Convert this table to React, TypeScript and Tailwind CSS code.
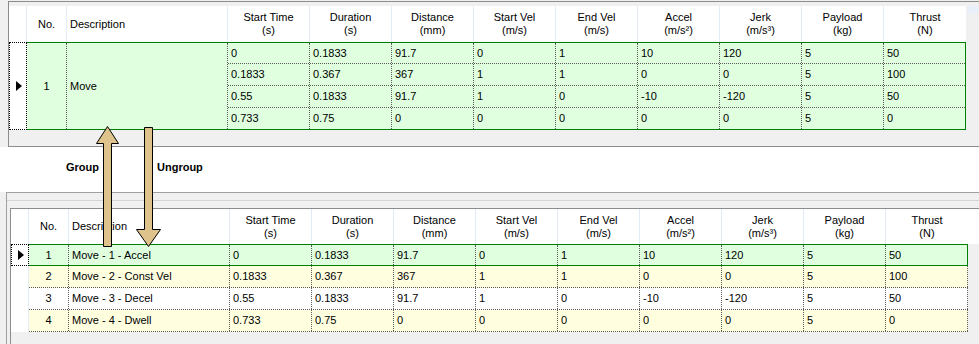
const COLS: [string, string][] = [
  ["Start Time", "(s)"],
  ["Duration", "(s)"],
  ["Distance", "(mm)"],
  ["Start Vel", "(m/s)"],
  ["End Vel", "(m/s)"],
  ["Accel", "(m/s²)"],
  ["Jerk", "(m/s³)"],
  ["Payload", "(kg)"],
  ["Thrust", "(N)"],
];

const ROWS = [
  ["0", "0.1833", "91.7", "0", "1", "10", "120", "5", "50"],
  ["0.1833", "0.367", "367", "1", "1", "0", "0", "5", "100"],
  ["0.55", "0.1833", "91.7", "1", "0", "-10", "-120", "5", "50"],
  ["0.733", "0.75", "0", "0", "0", "0", "0", "5", "0"],
];

const DESC = ["Move - 1 - Accel", "Move - 2 - Const Vel", "Move - 3 - Decel", "Move - 4 - Dwell"];

function Triangle() {
  return (
    <svg width="6" height="10" viewBox="0 0 6 10" className="ml-[2px]">
      <polygon points="0,0 6,5 0,10" fill="#000" />
    </svg>
  );
}

function Header({ tall }: { tall: boolean }) {
  return (
    <div className={`flex bg-white ${tall ? "h-[36px]" : "h-[35px]"}`}>
      <div className="w-[18px] border-r border-[#e3ebf6]" />
      <div className="w-[40px] border-r border-[#e3ebf6] flex items-center justify-center">No.</div>
      <div className="w-[161px] border-r border-[#e3ebf6] flex items-center pl-[3px]">Description</div>
      {COLS.map(([a, b], i) => (
        <div key={a}
          className={`w-[82px] flex flex-col items-center justify-center leading-[13px] ${i < COLS.length - 1 ? "border-r border-[#e3ebf6]" : ""}`}>
          <span>{a}</span>
          <span>{b}</span>
        </div>
      ))}
    </div>
  );
}

function Cells({ row, lastBorder }: { row: string[]; lastBorder: boolean }) {
  return (
    <>
      {row.map((v, i) => {
        const last = i === row.length - 1;
        return (
          <div key={i}
            className={`flex items-center pl-[3px] ${last && !lastBorder ? "w-[81px]" : "w-[82px] border-r border-dotted border-[#5a5a5a]"}`}>
            {v}
          </div>
        );
      })}
    </>
  );
}

function GroupedGrid() {
  const heights = ["h-[21px]", "h-[22px]", "h-[22px]", "h-[21px]"];
  return (
    <div>
      <div className="flex">
        <Header tall />
        <div className="flex-1 pl-[1px]"><div className="h-[7px] bg-[#e9f0f9]" /></div>
      </div>
      <div className="flex h-[88px]">
        <div className="w-[18px] h-full border border-dotted border-black bg-white flex items-center justify-center">
          <Triangle />
        </div>
        <div className="w-[939px] h-full border-y border-r border-[#008000] bg-[#dfffdf] flex">
          <div className="w-[40px] border-r border-dotted border-[#5a5a5a] flex items-center justify-center">1</div>
          <div className="w-[161px] border-r border-dotted border-[#5a5a5a] flex items-center pl-[3px]">Move</div>
          <div className="flex flex-col">
            {ROWS.map((r, i) => (
              <div key={i} className={`flex ${heights[i]} ${i < 3 ? "border-b border-dotted border-[#5a5a5a]" : ""}`}>
                <Cells row={r} lastBorder={false} />
              </div>
            ))}
          </div>
        </div>
      </div>
    </div>
  );
}

function FlatGrid() {
  return (
    <div>
      <Header tall={false} />
      {/* selected row */}
      <div className="flex h-[22px]">
        <div className="w-[18px] h-full border border-dotted border-black bg-white flex items-center justify-center">
          <Triangle />
        </div>
        <div className="w-[939px] h-full border-y border-r border-[#008000] bg-[#dfffdf] flex">
          <div className="w-[40px] border-r border-dotted border-[#5a5a5a] flex items-center justify-center">1</div>
          <div className="w-[161px] border-r border-dotted border-[#5a5a5a] flex items-center pl-[3px]">{DESC[0]}</div>
          <Cells row={ROWS[0]} lastBorder={false} />
        </div>
      </div>
      {ROWS.slice(1).map((r, i) => (
        <div key={i} className="flex h-[22px]">
          <div className="w-[18px] h-full bg-white border-r border-[#e3ebf6]" />
          <div className={`w-[939px] h-full flex border-b border-dotted border-[#5a5a5a] ${i === 1 ? "bg-white" : "bg-[#ffffe0]"}`}>
            <div className="w-[40px] border-r border-dotted border-[#5a5a5a] flex items-center justify-center">{i + 2}</div>
            <div className="w-[161px] border-r border-dotted border-[#5a5a5a] flex items-center pl-[3px]">{DESC[i + 1]}</div>
            <Cells row={r} lastBorder />
          </div>
        </div>
      ))}
    </div>
  );
}

export default function App() {
  return (
    <div className="relative w-[979px] h-[344px] overflow-hidden bg-[#f0f0f0] text-[11px] text-black font-['Liberation_Sans',Arial,sans-serif]">
      {/* grouped view */}
      <div className="h-[147px] pl-[8px] pt-[1px]">
        <div className="h-[146px] border-l border-t border-b border-[#8c8c8c] pt-[4px]">
          <GroupedGrid />
        </div>
      </div>

      {/* labels */}
      <div className="h-[45px] bg-white flex pl-[66px] pt-[13px] gap-[58px] font-bold leading-[14px]">
        <span>Group</span>
        <span>Ungroup</span>
      </div>

      {/* flat view */}
      <div className="h-[152px] pl-[6px]">
        <div className="h-full border-l border-t border-[#a0a0a0] pt-[7px]">
          <div className="border-t border-[#d4d4d4] pt-[7px]">
            <div className="ml-[3px] h-[200px] border-l border-t border-[#8c8c8c]">
              <FlatGrid />
            </div>
          </div>
        </div>
      </div>

      {/* arrows */}
      <svg className="absolute inset-0 pointer-events-none" width="979" height="344">
        <polygon
          points="107.5,126.5 118.5,143.5 111.5,143.5 111.5,246.5 103.5,246.5 103.5,143.5 96.5,143.5"
          fill="#dec48c" stroke="#000" strokeWidth="1" />
        <polygon
          points="144.5,127.5 152.5,127.5 152.5,229.5 160.5,229.5 148.5,246.5 136.5,229.5 144.5,229.5"
          fill="#dec48c" stroke="#000" strokeWidth="1" />
      </svg>
    </div>
  );
}
